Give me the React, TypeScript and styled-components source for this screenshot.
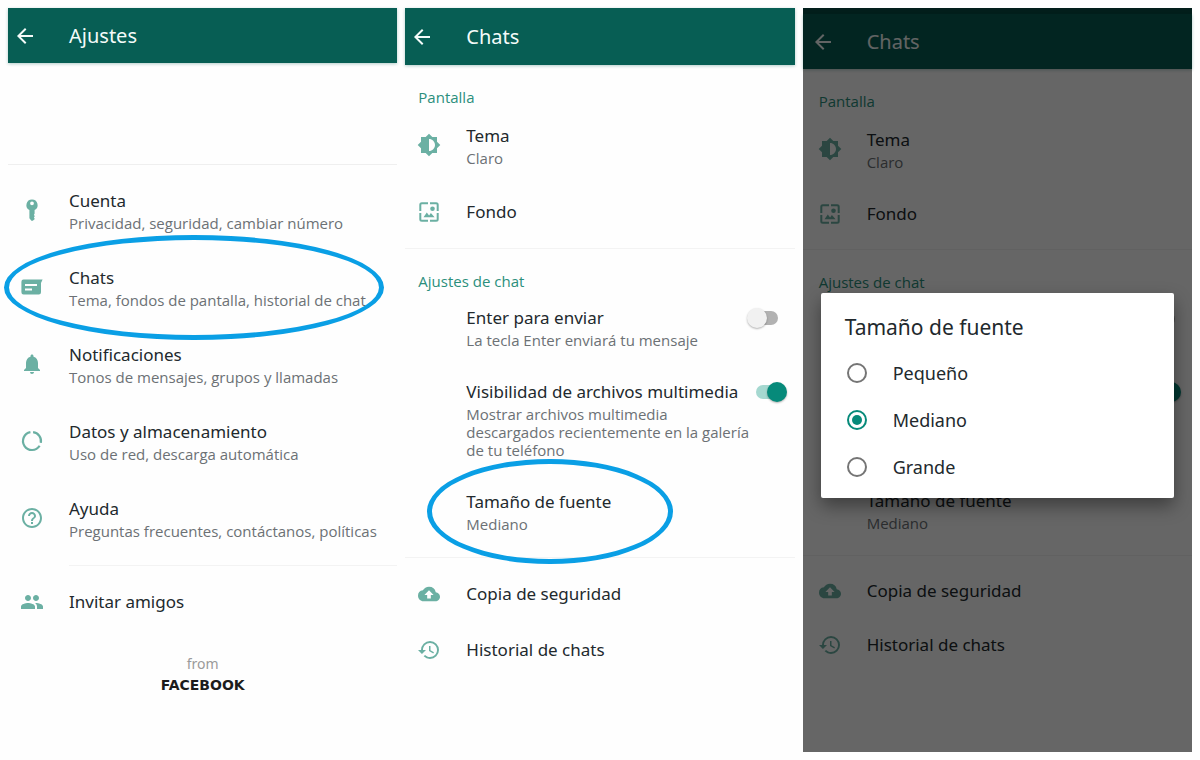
import React, { useState } from "react";
import styled, { createGlobalStyle, css } from "styled-components";
import {
  MdArrowBack,
  MdBackup,
  MdBrightnessMedium,
  MdHelpOutline,
  MdHistory,
  MdNotifications,
  MdPeople,
} from "react-icons/md";

const GlobalStyle = createGlobalStyle`
  *, *::before, *::after { box-sizing: border-box; }
  body {
    margin: 0;
    background: #fefefe;
    color: #22292d;
    font-family: "Noto Sans", sans-serif;
  }
  h1, h2, p { margin: 0; font-weight: 400; }
  button { font: inherit; color: inherit; }
`;

const Board = styled.main`
  display: grid;
  grid-template-columns: repeat(3, 1fr);
  gap: 8px;
  padding: 8px;
  min-height: 100vh;
`;

const Screen = styled.section`
  position: relative;
  min-width: 0;
`;

const AppBar = styled.header<{ $height: number; $inset?: number }>`
  display: flex;
  align-items: center;
  gap: 32px;
  height: ${(p) => p.$height}px;
  padding-left: ${(p) => 5 + (p.$inset ?? 0)}px;
  background: #075e54;
  color: #f4fbf9;
  box-shadow: 0 1px 3px rgba(7, 94, 84, 0.3);
`;

const StatusStrip = styled.div`
  height: 6px;
  background: #054d44;
`;

const BackButton = styled.button`
  display: flex;
  padding: 0;
  border: 0;
  background: none;
`;

const BarTitle = styled.h1`
  font-size: 20px;
  line-height: 28px;
`;

const ProfileArea = styled.div`
  height: 102px;
  border-bottom: 1px solid #efefef;
`;

const List = styled.div`
  padding-top: 7px;
`;

const Divider = styled.hr<{ $indent?: boolean }>`
  height: 1px;
  margin: 8px 0 0 ${(p) => (p.$indent ? 61 : 0)}px;
  border: 0;
  background: #f3f3f3;
`;

const Group = styled.div`
  padding-top: 8px;
`;

const SectionTitle = styled.h2<{ $inset: number }>`
  padding: 22px 0 0 ${(p) => 13 + p.$inset}px;
  font-family: "Open Sans", sans-serif;
  font-size: 15px;
  line-height: 20px;
  color: #2b8f7c;
`;

type RowSize = "tall" | "medium" | "single";

const rowHeights: Record<RowSize, ReturnType<typeof css>> = {
  tall: css`
    padding-top: 16px;
    padding-bottom: 17px;
  `,
  medium: css`
    padding-top: 14px;
    padding-bottom: 16px;
  `,
  single: css`
    padding-top: 15px;
    padding-bottom: 15px;
  `,
};

const compactHeights: Record<RowSize, ReturnType<typeof css>> = {
  tall: css`
    padding-top: 16px;
    padding-bottom: 16px;
  `,
  medium: css`
    padding-top: 14px;
    padding-bottom: 15px;
  `,
  single: css`
    padding-top: 14px;
    padding-bottom: 14px;
  `,
};

interface RowStyle {
  $size: RowSize;
  $inset?: number;
  $end?: number;
  $compact?: boolean;
}

const rowStyle = css<RowStyle>`
  display: flex;
  align-items: center;
  gap: 25px;
  width: 100%;
  border: 0;
  background: none;
  text-align: left;
  ${(p) => (p.$compact ? compactHeights : rowHeights)[p.$size]}
  padding-left: ${(p) => 12 + (p.$inset ?? 0)}px;
  padding-right: ${(p) => p.$end ?? 8}px;
`;

const RowButton = styled.button<RowStyle>`
  ${rowStyle}
`;

const SwitchLabel = styled.label<RowStyle>`
  ${rowStyle}
`;

const RowWrap = styled.div`
  position: relative;
`;

const IconSlot = styled.span`
  display: flex;
  flex: 0 0 24px;
  justify-content: center;
  color: #6bb0a3;
`;

const RowText = styled.span<{ $covered?: boolean }>`
  flex: 1;
  min-width: 0;
  visibility: ${(p) => (p.$covered ? "hidden" : "visible")};
`;

const RowTitle = styled.span`
  display: block;
  font-size: 17px;
  line-height: 26px;
  white-space: nowrap;
`;

const RowNote = styled.span`
  display: block;
  font-family: "Open Sans", sans-serif;
  font-size: 15px;
  line-height: 18px;
  color: #6c7175;
`;

const SwitchBox = styled.span`
  position: relative;
  display: flex;
  align-items: center;
  align-self: flex-start;
  width: 32px;
  height: 26px;
  margin-left: -20px;
`;

const SwitchInput = styled.input`
  appearance: none;
  width: 30px;
  height: 14px;
  margin: 0 1px;
  border-radius: 7px;
  background: #b2b2b2;

  &::before {
    content: "";
    position: absolute;
    top: 3px;
    left: 0;
    width: 20px;
    height: 20px;
    border-radius: 50%;
    background: #f1f1f1;
    box-shadow: 0 1px 2px rgba(0, 0, 0, 0.3);
  }

  &:checked {
    background: #a5d8d0;
  }

  &:checked::before {
    left: 12px;
    background: #068a7a;
  }
`;

const Ring = styled.span<{ $top: number; $left: number; $right: number }>`
  position: absolute;
  z-index: 1;
  top: ${(p) => p.$top}px;
  left: ${(p) => p.$left}px;
  right: ${(p) => p.$right}px;
  height: 105px;
  border: 5px solid #0a9fe5;
  border-radius: 50%;
  pointer-events: none;
`;

const Brand = styled.footer`
  padding-top: 24px;
  text-align: center;
`;

const BrandFrom = styled.p`
  font-size: 14px;
  line-height: 20px;
  color: #9a9a9a;
`;

const BrandName = styled.p`
  font-family: "DejaVu Sans", sans-serif;
  font-size: 14px;
  font-weight: 700;
  line-height: 22px;
  color: #1c1c1c;
`;

const Scrim = styled.div`
  position: absolute;
  z-index: 1;
  inset: 0;
  display: flex;
  align-items: center;
  padding: 31px 18px 0;
  background: rgba(0, 0, 0, 0.6);
`;

const Dialog = styled.div`
  flex: 1;
  padding: 20px 24px 8px;
  border-radius: 2px;
  background: #fff;
  box-shadow: 0 8px 18px rgba(0, 0, 0, 0.4);
`;

const DialogTitle = styled.h2`
  margin-bottom: 8px;
  font-size: 21px;
  line-height: 28px;
`;

const Option = styled.label`
  display: flex;
  align-items: center;
  gap: 26px;
  height: 47px;
  padding-left: 2px;
  font-size: 18px;
`;

const Radio = styled.input`
  appearance: none;
  display: grid;
  place-items: center;
  width: 20px;
  height: 20px;
  margin: 0;
  border: 2px solid #757575;
  border-radius: 50%;

  &:checked {
    border-color: #068a7a;
  }

  &:checked::before {
    content: "";
    width: 10px;
    height: 10px;
    border-radius: 50%;
    background: #068a7a;
  }
`;

const KeyIcon = () => (
  <svg width="24" height="24" viewBox="0 0 24 24" fill="currentColor" aria-hidden="true">
    <path
      fillRule="evenodd"
      d="M12 1.400a5.600 5.600 0 0 0-2.600 10.560v8.300l2 2.400h1.400l2-1.700-.9-1.400.9-1.400-.9-1.400.7-1V11.960A5.600 5.600 0 0 0 12 1.400zm0 2a1.900 1.900 0 1 1 0 3.800 1.900 1.900 0 0 1 0-3.800z"
    />
  </svg>
);

const ChatIcon = () => (
  <svg width="24" height="24" viewBox="0 0 24 24" fill="currentColor" aria-hidden="true">
    <path
      fillRule="evenodd"
      d="M3.600 4.500h19l-1.600 3.400v9.400a2.200 2.200 0 0 1-2.200 2.200H3.600a2.200 2.200 0 0 1-2.200-2.200V6.700a2.200 2.200 0 0 1 2.200-2.200zM5 9v2h12V9zm0 4.500v2h7v-2z"
    />
  </svg>
);

const DataIcon = () => (
  <svg width="24" height="24" viewBox="0 0 24 24" fill="none" stroke="currentColor" strokeWidth="2.200" aria-hidden="true">
    <path d="M13.100 3.070A9 9 0 0 1 20.800 13.870" />
    <path d="M19.630 16.770A9 9 0 1 1 10.400 3.140" />
  </svg>
);

const WallpaperIcon = () => (
  <svg width="24" height="24" viewBox="0 0 24 24" fill="currentColor" aria-hidden="true">
    <path
      fill="none"
      stroke="currentColor"
      strokeWidth="2"
      d="M11 3.300H4.800a1.500 1.500 0 0 0-1.500 1.500V11M13 3.300h6.200a1.500 1.500 0 0 1 1.500 1.500V11M3.300 13v6.200a1.500 1.500 0 0 0 1.500 1.500H11M20.700 13v6.200a1.500 1.500 0 0 1-1.500 1.500H13"
    />
    <circle cx="15.500" cy="8.700" r="2.300" />
    <path d="M6.500 17.300l3.300-4.800 2.300 2.900 1.800-2.300 3.700 4.200z" />
  </svg>
);

interface ItemProps {
  icon?: React.ReactNode;
  title: string;
  note?: string;
  size: RowSize;
  inset?: number;
  compact?: boolean;
}

const Item = ({ icon, title, note, size, inset, compact }: ItemProps) => (
  <RowButton type="button" $size={size} $inset={inset} $compact={compact}>
    <IconSlot>{icon}</IconSlot>
    <RowText>
      <RowTitle>{title}</RowTitle>
      {note && <RowNote>{note}</RowNote>}
    </RowText>
  </RowButton>
);

interface SwitchItemProps {
  title: string;
  note: string;
  on?: boolean;
  end: number;
  inset?: number;
  compact?: boolean;
}

const SwitchItem = ({ title, note, on, end, inset, compact }: SwitchItemProps) => (
  <SwitchLabel $size="medium" $inset={inset} $end={end} $compact={compact}>
    <IconSlot />
    <RowText $covered={compact}>
      <RowTitle>{title}</RowTitle>
      <RowNote>{note}</RowNote>
    </RowText>
    <SwitchBox>
      <SwitchInput type="checkbox" role="switch" aria-label={title} defaultChecked={on} />
    </SwitchBox>
  </SwitchLabel>
);

const Bar = ({ title, height, inset }: { title: string; height: number; inset?: number }) => (
  <AppBar $height={height} $inset={inset}>
    <BackButton type="button" aria-label="Atrás">
      <MdArrowBack size={24} />
    </BackButton>
    <BarTitle>{title}</BarTitle>
  </AppBar>
);

const ChatSettings = ({ compact = false }: { compact?: boolean }) => {
  const inset = compact ? 3 : 0;
  const shared = { inset, compact };
  return (
    <>
      <SectionTitle $inset={inset}>Pantalla</SectionTitle>
      <Item {...shared} size="tall" icon={<MdBrightnessMedium size={24} />} title="Tema" note="Claro" />
      <Item {...shared} size="single" icon={<WallpaperIcon />} title="Fondo" />
      <Divider />
      <SectionTitle $inset={inset}>Ajustes de chat</SectionTitle>
      <SwitchItem {...shared} end={16} title="Enter para enviar" note="La tecla Enter enviará tu mensaje" />
      <SwitchItem
        {...shared}
        on
        end={compact ? 11 : 8}
        title="Visibilidad de archivos multimedia"
        note="Mostrar archivos multimedia descargados recientemente en la galería de tu teléfono"
      />
      <RowWrap>
        <Item {...shared} size="medium" title="Tamaño de fuente" note="Mediano" />
        {!compact && <Ring $top={-16} $left={22} $right={122} />}
      </RowWrap>
      <Divider />
      <Group>
        <Item {...shared} size="single" icon={<MdBackup size={22} />} title="Copia de seguridad" />
        <Item {...shared} size="single" icon={<MdHistory size={24} />} title="Historial de chats" />
      </Group>
    </>
  );
};

const fontSizes = ["Pequeño", "Mediano", "Grande"];

export default function App() {
  const [fontSize, setFontSize] = useState("Mediano");
  return (
    <>
      <GlobalStyle />
      <Board>
        <Screen>
          <Bar title="Ajustes" height={55} />
          <ProfileArea />
          <List>
            <Item size="tall" icon={<KeyIcon />} title="Cuenta" note="Privacidad, seguridad, cambiar número" />
            <RowWrap>
              <Item size="tall" icon={<ChatIcon />} title="Chats" note="Tema, fondos de pantalla, historial de chat" />
              <Ring $top={-14} $left={-4} $right={13} />
            </RowWrap>
            <Item
              size="tall"
              icon={<MdNotifications size={24} />}
              title="Notificaciones"
              note="Tonos de mensajes, grupos y llamadas"
            />
            <Item
              size="tall"
              icon={<DataIcon />}
              title="Datos y almacenamiento"
              note="Uso de red, descarga automática"
            />
            <Item
              size="tall"
              icon={<MdHelpOutline size={24} />}
              title="Ayuda"
              note="Preguntas frecuentes, contáctanos, políticas"
            />
            <Divider $indent />
            <Group>
              <Item size="single" icon={<MdPeople size={24} />} title="Invitar amigos" />
            </Group>
          </List>
          <Brand>
            <BrandFrom>from</BrandFrom>
            <BrandName>FACEBOOK</BrandName>
          </Brand>
        </Screen>

        <Screen>
          <Bar title="Chats" height={57} />
          <ChatSettings />
        </Screen>

        <Screen>
          <StatusStrip />
          <Bar title="Chats" height={55} inset={3} />
          <ChatSettings compact />
          <Scrim>
            <Dialog role="dialog" aria-modal="true" aria-labelledby="font-size-title">
              <DialogTitle id="font-size-title">Tamaño de fuente</DialogTitle>
              {fontSizes.map((name) => (
                <Option key={name}>
                  <Radio
                    type="radio"
                    name="font-size"
                    value={name}
                    checked={fontSize === name}
                    onChange={() => setFontSize(name)}
                  />
                  {name}
                </Option>
              ))}
            </Dialog>
          </Scrim>
        </Screen>
      </Board>
    </>
  );
}
